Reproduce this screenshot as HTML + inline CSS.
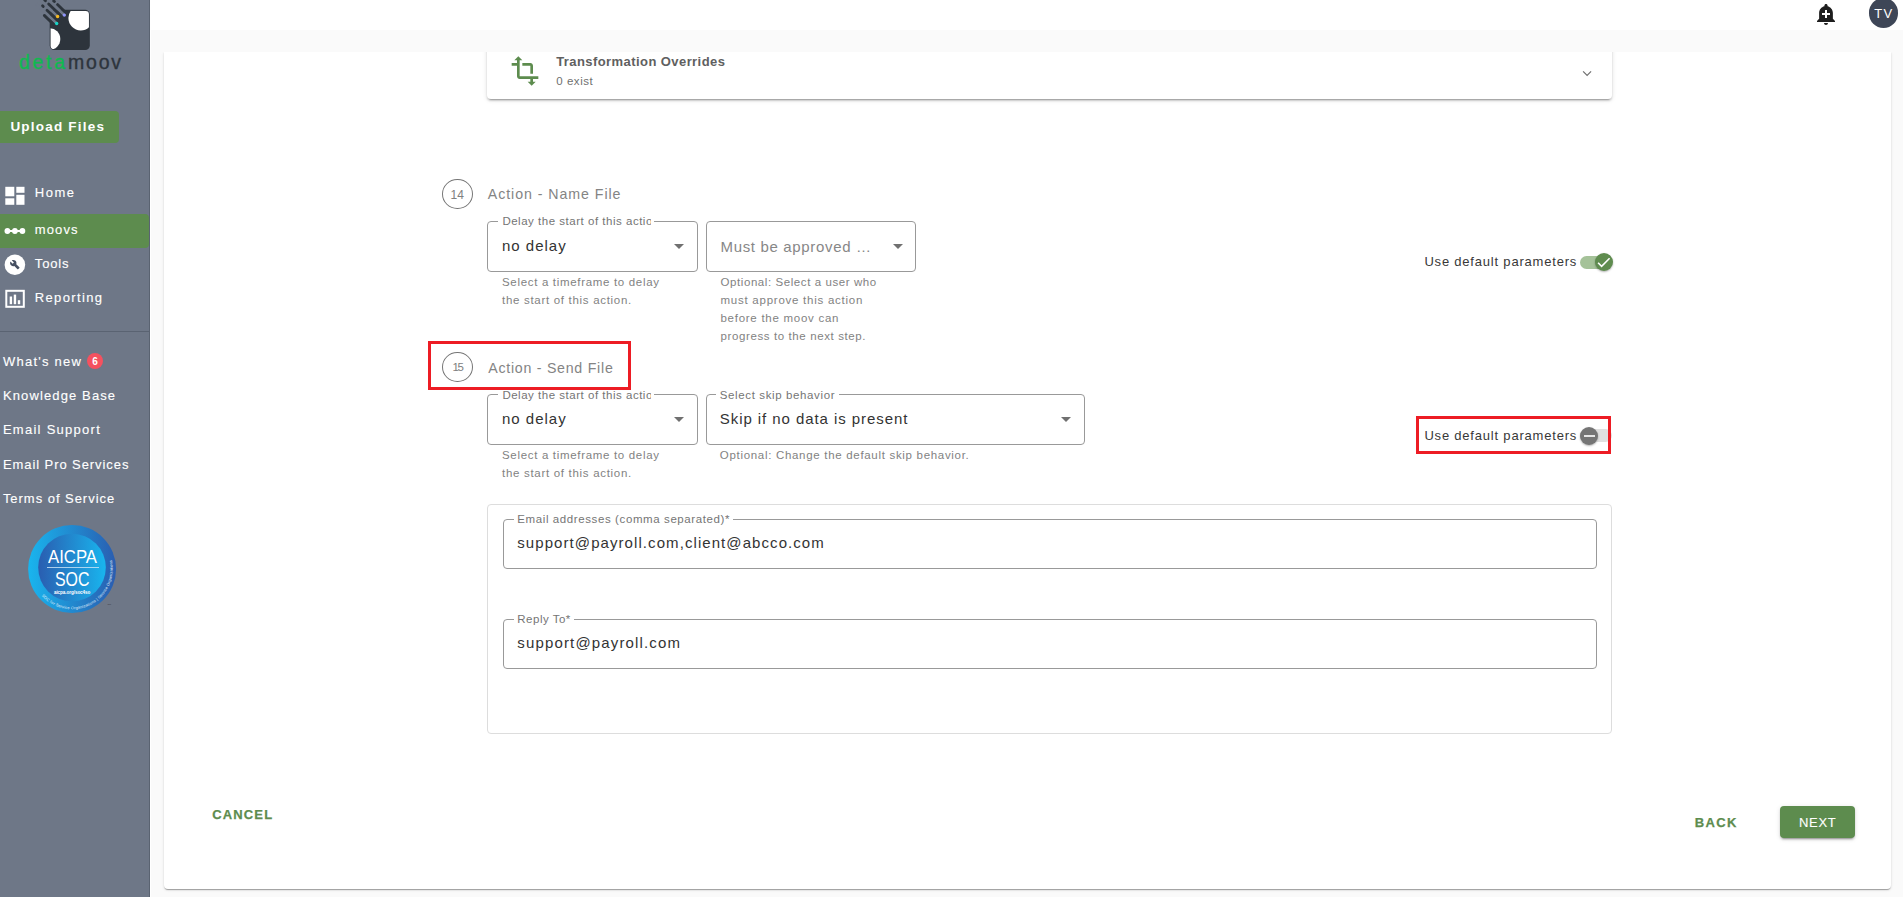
<!DOCTYPE html>
<html lang="en">
<head>
<meta charset="utf-8">
<title>detamoov - moov actions</title>
<style>
html,body{margin:0;padding:0}
body{width:1903px;height:897px;overflow:hidden;background:#fafafa;position:relative;font-family:'Liberation Sans',sans-serif}
.abs{position:absolute}
.t{position:absolute;display:block;margin:0;padding:0;line-height:0;white-space:pre;font-family:'Liberation Sans',sans-serif}
#sidebar{position:absolute;left:0;top:0;width:149px;height:897px;background:#6e7787;border-right:1px solid #5a6371}
#topbar{position:absolute;left:150px;top:0;width:1753px;height:30px;background:#fff}
#strip{position:absolute;left:150px;top:30px;width:1.3px;height:867px;background:#fff}
#clip{position:absolute;left:152px;top:52px;width:1751px;height:845px;overflow:hidden}
#paper{position:absolute;left:12px;top:0;width:1727px;height:837px;background:#fff;border-radius:0 0 4px 4px;box-shadow:0 2px 1px -1px rgba(0,0,0,.2),0 1px 1px 0 rgba(0,0,0,.14),0 1px 3px 0 rgba(0,0,0,.12);overflow:hidden}
#inner{position:absolute;left:-164px;top:-52px;width:1903px;height:897px}
#acc{position:absolute;left:487px;top:20px;width:1125px;height:78.5px;background:#fff;border-radius:4px;box-shadow:0 3px 1px -2px rgba(0,0,0,.2),0 2px 2px 0 rgba(0,0,0,.14),0 1px 5px 0 rgba(0,0,0,.12)}
.fld{position:absolute;box-sizing:border-box;border:1px solid #999;border-radius:4px;background:#fff}
.notch{position:absolute;height:3px;background:#fff}
.step{position:absolute;box-sizing:border-box;width:31px;height:30.4px;border:1px solid #757575;border-radius:50%}
.red{position:absolute;box-sizing:border-box;border:3px solid #ed1c24}
.arrow{position:absolute;width:0;height:0;border-left:5px solid transparent;border-right:5px solid transparent;border-top:5px solid #707070}
#panel{position:absolute;left:487px;top:504px;width:1125px;height:230px;box-sizing:border-box;border:1px solid #ddd;border-radius:4px}
.up{position:absolute;left:0;top:111px;width:119px;height:32px;background:#5d8c4e;border-radius:0 4px 4px 0}
.active{position:absolute;left:0;top:214px;width:149px;height:34px;background:#5d8c4e;border-radius:0 4px 4px 0}
.divider{position:absolute;left:0;top:331px;width:149px;height:1px;background:#5a6372}
.badge{position:absolute;left:87px;top:353px;width:16px;height:16px;border-radius:50%;background:#f5515f}
#next{position:absolute;left:1780px;top:806px;width:75px;height:32px;background:#5d8c4e;border-radius:4px;box-shadow:0 3px 1px -2px rgba(0,0,0,.2),0 2px 2px 0 rgba(0,0,0,.14),0 1px 5px 0 rgba(0,0,0,.12)}
#avatar{position:absolute;left:1868.7px;top:-1.6px;width:29.4px;height:29.4px;border-radius:50%;background:#3e4657}
.track{position:absolute;width:32px;height:13px;border-radius:6.5px}
.thumb{position:absolute;width:18px;height:18px;border-radius:50%;box-shadow:0 1px 2px rgba(0,0,0,.3)}
svg{position:absolute;overflow:visible}
</style>
</head>
<body>
<div id="topbar"></div>
<div id="strip"></div>

<!-- main paper -->
<div id="clip"><div id="paper"><div id="inner">
  <div id="acc"></div>
  <svg style="left:508.6px;top:54.9px" width="32" height="32" viewBox="0 0 24 24"><path fill="#5d8c4e" d="M22 18v-2H8V4h2L7 1 4 4h2v2H2v2h4v8c0 1.1.9 2 2 2h8v2h-2l3 3 3-3h-2v-2h4zM10 8h6v6h2V8c0-1.1-.9-2-2-2h-6v2z"/></svg>
  <svg style="left:1581px;top:69px" width="12" height="9" viewBox="0 0 12 9"><path d="M2.1 2.3 L6.1 6.4 L10.1 2.3" fill="none" stroke="#6e6e6e" stroke-width="1.15"/></svg>

  <!-- step 14 -->
  <div class="step" style="left:442px;top:178.8px"></div>
  <div class="fld" style="left:487px;top:221px;width:211px;height:51px"></div>
  <div class="notch" style="left:497.7px;top:220px;width:156px"></div>
  <div class="arrow" style="left:674px;top:244px"></div>
  <div class="fld" style="left:706px;top:221px;width:210px;height:51px"></div>
  <div class="arrow" style="left:893.2px;top:244px"></div>
  <div class="track" style="left:1580px;top:256px;background:#a5c299"></div>
  <div class="thumb" style="left:1594.8px;top:253px;background:#5f8c4f"></div>
  <svg style="left:1594.8px;top:253px" width="18" height="18" viewBox="0 0 18 18"><path d="M3.1 9.8 L6.6 13.3 L14.6 5.3" fill="none" stroke="#fff" stroke-width="1.6"/></svg>

  <!-- step 15 -->
  <div class="red" style="left:428px;top:341px;width:203px;height:49px"></div>
  <div class="step" style="left:442px;top:352px"></div>
  <div class="fld" style="left:487px;top:394px;width:211px;height:51px"></div>
  <div class="notch" style="left:497.7px;top:393px;width:156px"></div>
  <div class="arrow" style="left:674px;top:417.3px"></div>
  <div class="fld" style="left:706px;top:394px;width:379px;height:51px"></div>
  <div class="notch" style="left:716px;top:393px;width:122.6px"></div>
  <div class="arrow" style="left:1061.3px;top:417.3px"></div>
  <div class="track" style="left:1580px;top:429px;background:#e0e0e0"></div>
  <div class="thumb" style="left:1580px;top:427px;background:#757575"></div>
  <div class="abs" style="left:1583.6px;top:435px;width:11.4px;height:2px;background:#e6e6e6"></div>
  <div class="red" style="left:1416px;top:416px;width:195px;height:38px"></div>

  <!-- email panel -->
  <div id="panel"></div>
  <div class="fld" style="left:503px;top:519px;width:1094px;height:50px"></div>
  <div class="notch" style="left:513.5px;top:518px;width:219.5px"></div>
  <div class="fld" style="left:503px;top:619px;width:1094px;height:50px"></div>
  <div class="notch" style="left:513.5px;top:618px;width:60.5px"></div>

  <div id="next"></div>
</div></div></div>

<!-- sidebar -->
<div id="sidebar">
  <div class="up"></div>
  <div class="active"></div>
  <div class="divider"></div>
  <div class="badge"></div>
</div>

<!-- logo -->
<svg id="logo" style="left:0;top:0" width="150" height="80" viewBox="0 0 150 80">
  <rect x="49.7" y="9.8" width="40.1" height="40.3" rx="4.6" fill="#2d343c"/>
  <g stroke="#6e7787" stroke-width="2.9" fill="none">
    <path d="M44.25 -4.28 L64.31 15.11"/>
    <path d="M40.33 -0.22 L57.59 16.46"/>
    <path d="M36.41 3.84 L56.69 23.44"/>
  </g>
  <g stroke="#2d343c" stroke-width="2.8" stroke-linecap="round" fill="none">
    <path d="M57.50 4.60 L68.25 15.00"/>
    <path d="M53.7 0.9 l0.7 0.68"/>
    <path d="M48.68 3.93 L64.33 19.06"/>
    <path d="M44.75 0.1 l0.7 0.68"/>
    <path d="M47.01 10.16 L60.41 23.11"/>
    <path d="M42.55 5.85 l0.7 0.68"/>
    <path d="M44.28 15.37 L56.49 27.17"/>
  </g>
  <clipPath id="lc"><rect x="50.6" y="11" width="38.35" height="38.1" rx="3.4"/></clipPath>
  <g clip-path="url(#lc)" fill="#fff">
    <circle cx="80.7" cy="18.1" r="12.3"/>
    <circle cx="49.5" cy="39" r="10.8"/>
  </g>
  <circle cx="64.31" cy="15.11" r="1.7" fill="#8f94fb"/>
  <circle cx="57.59" cy="16.46" r="1.7" fill="#f5b921"/>
  <circle cx="56.69" cy="23.44" r="1.7" fill="#19d3c5"/>
</svg>

<!-- sidebar icons -->
<svg style="left:0;top:180px" width="40" height="135" viewBox="0 180 40 135">
  <g fill="#fff">
    <rect x="5.3" y="186.8" width="9" height="9.5"/>
    <rect x="5.3" y="198.3" width="9" height="6.5"/>
    <rect x="16.3" y="186.8" width="8.2" height="6"/>
    <rect x="16.3" y="194.8" width="8.2" height="10"/>
    <circle cx="7.4" cy="231" r="2.9"/><circle cx="14.9" cy="231" r="2.9"/><circle cx="22.4" cy="231" r="2.9"/>
    <rect x="7.4" y="230" width="15" height="2"/>
    <circle cx="14.9" cy="264.7" r="10.3"/>
  </g>
  <g transform="translate(3.9,253.7) scale(0.917)"><path fill="#465062" d="M16.9 15.49l-1.4 1.4c-.2.2-.51.2-.71 0l-3.41-3.41c-1.22.43-2.64.17-3.62-.81-1.11-1.11-1.3-2.79-.59-4.1l2.35 2.35 1.41-1.41-2.35-2.34c1.32-.71 2.99-.52 4.1.59.98.98 1.24 2.4.81 3.62l3.41 3.41c.19.19.19.51 0 .7z"/></g>
  <rect x="6.3" y="290.8" width="17.5" height="16" fill="none" stroke="#fff" stroke-width="2"/>
  <g fill="#fff">
    <rect x="9.7" y="296.5" width="2.4" height="7.7"/>
    <rect x="13.75" y="294.6" width="2.4" height="9.6"/>
    <rect x="17.8" y="300.2" width="2.4" height="4"/>
  </g>
</svg>

<!-- AICPA badge -->
<svg style="left:20px;top:520px" width="110" height="100" viewBox="20 520 110 100">
  <defs>
    <linearGradient id="g1" x1="0" y1="0" x2="1" y2="0"><stop offset="0" stop-color="#19b5ee"/><stop offset="1" stop-color="#2a5db0"/></linearGradient>
    <linearGradient id="g2" x1="0" y1="0" x2="1" y2="0"><stop offset="0" stop-color="#2a5db0"/><stop offset="1" stop-color="#19b5ee"/></linearGradient>
    <path id="arc" d="M41.75 595.83 A40.7 40.7 0 0 0 110.25 554.68"/>
  </defs>
  <circle cx="72.1" cy="569" r="44" fill="url(#g1)"/>
  <circle cx="72" cy="567.5" r="33.8" fill="url(#g2)"/>
  <rect x="47" y="567" width="52" height="0.8" fill="#cfe6f7"/>
  <text font-family="'Liberation Sans',sans-serif" font-size="3.9" fill="#e4f3fc" letter-spacing="0.05"><textPath href="#arc" textLength="106.5">SOC for Service Organizations  |  Service Organizations</textPath></text>
  <text x="107.6" y="604.8" font-family="'Liberation Sans',sans-serif" font-size="2.4" fill="#333">TM</text>
</svg>

<!-- top bar icons -->
<svg style="left:1814px;top:2px" width="24" height="24" viewBox="0 0 24 24"><path fill="#1e1e1e" d="M10.01 21.01c0 1.1.89 1.99 1.99 1.99s1.99-.89 1.99-1.99h-3.98zm8.87-4.19V11c0-3.25-2.25-5.97-5.29-6.69v-.72C13.59 2.71 12.88 2 12 2s-1.59.71-1.590 1.59v.72C7.37 5.03 5.12 7.75 5.12 11v5.82L3 18.94V20h18v-1.06l-2.12-2.12zM16 13.01h-3v3h-2v-3H8V11h3V8h2v3h3v2.010z"/></svg>
<div id="avatar"></div>

<span class="t" role="button" style="left:10.4px;top:126.90px;font-size:13.5px;font-weight:700;color:#fff;letter-spacing:1.203px;">Upload Files</span>
<a class="t" style="left:34.8px;top:192.50px;font-size:13px;-webkit-text-stroke:0.12px;font-weight:400;color:#fff;letter-spacing:1.504px;">Home</a>
<a class="t" style="left:34.8px;top:229.60px;font-size:13px;-webkit-text-stroke:0.12px;font-weight:400;color:#fff;letter-spacing:1.126px;">moovs</a>
<a class="t" style="left:34.8px;top:263.50px;font-size:13px;-webkit-text-stroke:0.12px;font-weight:400;color:#fff;letter-spacing:0.835px;">Tools</a>
<a class="t" style="left:34.8px;top:298.10px;font-size:13px;-webkit-text-stroke:0.12px;font-weight:400;color:#fff;letter-spacing:1.353px;">Reporting</a>
<a class="t" style="left:2.9px;top:361.90px;font-size:13px;-webkit-text-stroke:0.12px;font-weight:400;color:#fff;letter-spacing:1.256px;">What&#x27;s new</a>
<span class="t" style="left:92.3px;top:361.70px;font-size:10px;font-weight:700;color:#fff;letter-spacing:0.000px;">6</span>
<a class="t" style="left:2.9px;top:396.10px;font-size:13px;-webkit-text-stroke:0.12px;font-weight:400;color:#fff;letter-spacing:1.125px;">Knowledge Base</a>
<a class="t" style="left:2.9px;top:430.20px;font-size:13px;-webkit-text-stroke:0.12px;font-weight:400;color:#fff;letter-spacing:1.270px;">Email Support</a>
<a class="t" style="left:2.9px;top:464.70px;font-size:13px;-webkit-text-stroke:0.12px;font-weight:400;color:#fff;letter-spacing:0.923px;">Email Pro Services</a>
<a class="t" style="left:2.9px;top:498.70px;font-size:13px;-webkit-text-stroke:0.12px;font-weight:400;color:#fff;letter-spacing:0.966px;">Terms of Service</a>
<span class="t" style="left:19.1px;top:61.90px;font-size:19.5px;font-weight:400;color:#10b950;letter-spacing:2.649px;-webkit-text-stroke:0.35px #10b950;">deta</span>
<span class="t" style="left:68.0px;top:61.90px;font-size:19.5px;font-weight:400;color:#2d343c;letter-spacing:1.771px;-webkit-text-stroke:0.35px #2d343c;">moov</span>
<span class="t" style="left:47.9px;top:557.00px;font-size:18.3px;font-weight:400;color:#fff;letter-spacing:0.000px;transform:scaleX(.915);transform-origin:0 0;">AICPA</span>
<span class="t" style="left:55.4px;top:579.50px;font-size:19.3px;font-weight:400;color:#fff;letter-spacing:0.000px;transform:scaleX(.825);transform-origin:0 0;">SOC</span>
<span class="t" style="left:53.9px;top:592.80px;font-size:4.6px;font-weight:700;color:#fff;letter-spacing:-0.069px;">aicpa.org/soc4so</span>
<span class="t" style="left:1874.2px;top:14.00px;font-size:13px;font-weight:400;color:#fff;letter-spacing:1.275px;">TV</span>
<h3 class="t" style="left:556.2px;top:61.90px;font-size:13px;font-weight:700;color:#606060;letter-spacing:0.424px;">Transformation Overrides</h3>
<span class="t" style="left:556.2px;top:81.40px;font-size:11.5px;font-weight:400;color:#707070;letter-spacing:0.558px;">0 exist</span>
<span class="t" style="left:450.5px;top:194.80px;font-size:12px;font-weight:400;color:#808080;letter-spacing:0.141px;">14</span>
<h3 class="t" style="left:487.8px;top:194.00px;font-size:14.2px;font-weight:400;color:#848484;letter-spacing:0.942px;">Action - Name File</h3>
<div style="position:absolute;left:502.4px;top:211.20px;width:148.7px;height:20px;overflow:hidden"><label class="t" style="left:0;top:10px;font-size:11.5px;font-weight:400;color:#757575;letter-spacing:0.515px;">Delay the start of this action</label></div>
<span class="t" style="left:502.0px;top:245.50px;font-size:15px;font-weight:400;color:#333;letter-spacing:0.997px;">no delay</span>
<span class="t" style="left:720.5px;top:247.10px;font-size:15px;font-weight:400;color:#878787;letter-spacing:0.662px;">Must be approved …</span>
<span class="t" style="left:502.0px;top:281.70px;font-size:11.5px;font-weight:400;color:#828282;letter-spacing:0.679px;">Select a timeframe to delay</span>
<span class="t" style="left:502.0px;top:299.60px;font-size:11.5px;font-weight:400;color:#828282;letter-spacing:0.695px;">the start of this action.</span>
<span class="t" style="left:720.5px;top:281.70px;font-size:11.5px;font-weight:400;color:#828282;letter-spacing:0.579px;">Optional: Select a user who</span>
<span class="t" style="left:720.5px;top:299.60px;font-size:11.5px;font-weight:400;color:#828282;letter-spacing:0.750px;">must approve this action</span>
<span class="t" style="left:720.5px;top:317.60px;font-size:11.5px;font-weight:400;color:#828282;letter-spacing:0.725px;">before the moov can</span>
<span class="t" style="left:720.5px;top:335.80px;font-size:11.5px;font-weight:400;color:#828282;letter-spacing:0.609px;">progress to the next step.</span>
<label class="t" style="left:1424.4px;top:262.30px;font-size:13px;font-weight:400;color:#383838;letter-spacing:0.799px;">Use default parameters</label>
<span class="t" style="left:452.5px;top:367.40px;font-size:11.5px;font-weight:400;color:#808080;letter-spacing:-1.397px;">15</span>
<h3 class="t" style="left:488.2px;top:368.20px;font-size:14.2px;font-weight:400;color:#848484;letter-spacing:0.742px;">Action - Send File</h3>
<div style="position:absolute;left:502.4px;top:384.50px;width:148.7px;height:20px;overflow:hidden"><label class="t" style="left:0;top:10px;font-size:11.5px;font-weight:400;color:#757575;letter-spacing:0.515px;">Delay the start of this action</label></div>
<span class="t" style="left:502.0px;top:418.70px;font-size:15px;font-weight:400;color:#333;letter-spacing:0.997px;">no delay</span>
<label class="t" style="left:719.8px;top:394.90px;font-size:11.5px;font-weight:400;color:#757575;letter-spacing:0.620px;">Select skip behavior</label>
<span class="t" style="left:719.8px;top:418.70px;font-size:15px;font-weight:400;color:#333;letter-spacing:0.933px;">Skip if no data is present</span>
<span class="t" style="left:502.0px;top:455.40px;font-size:11.5px;font-weight:400;color:#828282;letter-spacing:0.679px;">Select a timeframe to delay</span>
<span class="t" style="left:502.0px;top:473.40px;font-size:11.5px;font-weight:400;color:#828282;letter-spacing:0.695px;">the start of this action.</span>
<span class="t" style="left:719.8px;top:455.40px;font-size:11.5px;font-weight:400;color:#828282;letter-spacing:0.692px;">Optional: Change the default skip behavior.</span>
<label class="t" style="left:1424.4px;top:436.00px;font-size:13px;font-weight:400;color:#383838;letter-spacing:0.799px;">Use default parameters</label>
<label class="t" style="left:517.3px;top:519.40px;font-size:11.5px;font-weight:400;color:#757575;letter-spacing:0.600px;">Email addresses (comma separated)*</label>
<span class="t" style="left:517.3px;top:543.40px;font-size:15px;font-weight:400;color:#333;letter-spacing:1.074px;">support@payroll.com,client@abcco.com</span>
<label class="t" style="left:517.3px;top:619.40px;font-size:11.5px;font-weight:400;color:#757575;letter-spacing:0.498px;">Reply To*</label>
<span class="t" style="left:517.3px;top:642.80px;font-size:15px;font-weight:400;color:#333;letter-spacing:1.153px;">support@payroll.com</span>
<span class="t" role="button" style="left:212.2px;top:815.10px;font-size:13px;font-weight:700;color:#5d8c4e;letter-spacing:1.146px;-webkit-text-stroke:0.25px #5d8c4e;">CANCEL</span>
<span class="t" role="button" style="left:1694.7px;top:823.10px;font-size:13px;font-weight:700;color:#5d8c4e;letter-spacing:1.412px;-webkit-text-stroke:0.25px #5d8c4e;">BACK</span>
<span class="t" role="button" style="left:1799.0px;top:823.10px;font-size:13px;-webkit-text-stroke:0.12px;font-weight:400;color:#fff;letter-spacing:0.676px;">NEXT</span>
</body>
</html>
